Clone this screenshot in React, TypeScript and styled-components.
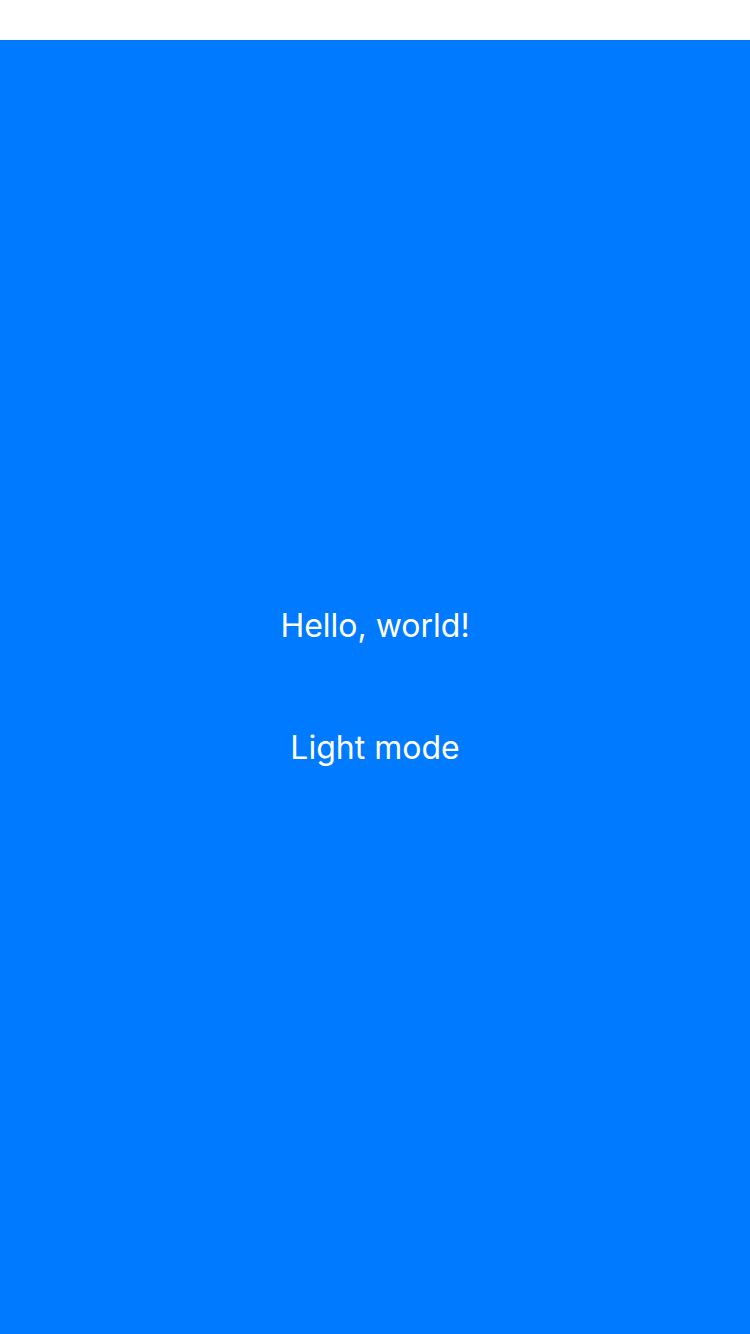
import React from "react";
import styled, { createGlobalStyle } from "styled-components";

const GlobalStyle = createGlobalStyle`
  html, body, #root {
    margin: 0;
    padding: 0;
    height: 100%;
  }
  body {
    font-family: Inter, "Noto Sans", sans-serif;
    background: #ffffff;
  }
`;

function App() {
  return (
    <>
      <GlobalStyle />
      <Screen>
        <StatusBar />
        <Main>
          <Label>Hello, world!</Label>
          <Label>Light mode</Label>
        </Main>
      </Screen>
    </>
  );
}

export default App;

const Screen = styled.div`
  display: flex;
  flex-direction: column;
  height: 1334px;
`;

const StatusBar = styled.div`
  height: 40px;
  background: #ffffff;
`;

const Main = styled.main`
  flex: 1;
  display: flex;
  flex-direction: column;
  align-items: center;
  justify-content: center;
  gap: 82px;
  background: #007aff;
`;

const Label = styled.div`
  color: #ffffff;
  font-size: 32px;
  line-height: 40px;
  letter-spacing: 0;
`;
